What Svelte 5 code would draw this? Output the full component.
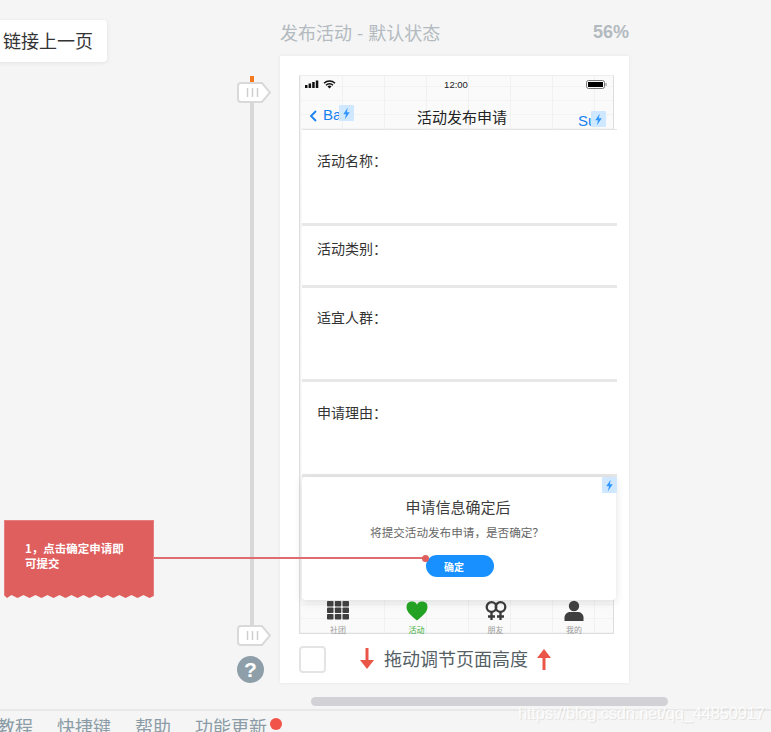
<script>
  const sections = [
    { label: "活动名称：", height: 96, pad: 20 },
    { label: "活动类别：", height: 62, pad: 12 },
    { label: "适宜人群：", height: 94, pad: 19 },
    { label: "申请理由：", height: 95, pad: 20 },
  ];
  const tabs = [
    { label: "社团", icon: "grid" },
    { label: "活动", icon: "heart", active: true },
    { label: "朋友", icon: "gender" },
    { label: "我的", icon: "person" },
  ];
  const bottomLinks = ["教程", "快捷键", "帮助"];
</script>

{#snippet bolt()}
  <svg viewBox="0 0 16 16" width="13" height="13"><path d="M9.500 1 4 9h3.400L6 15l6-8.400H8.400z" fill="#2f95ff" /></svg>
{/snippet}

{#snippet handle()}
  <svg viewBox="0 0 34 21" width="34" height="21">
    <path d="M4 1h21l8 9.500-8 9.500H4a3 3 0 0 1-3-3V4a3 3 0 0 1 3-3z" fill="#fff" stroke="#d9d9d9" stroke-width="2" />
    <path d="M10.500 6v9M15.500 6v9M20.500 6v9" stroke="#cfcfcf" stroke-width="1.500" />
  </svg>
{/snippet}

<div class="page">
  <div class="link-box">链接上一页</div>

  <div class="page-title">
    <span>发布活动 - 默认状态</span>
    <b>56%</b>
  </div>

  <div class="ruler">
    <div class="ruler-tick"></div>
    <div class="ruler-line"></div>
    <div class="handle top">{@render handle()}</div>
    <div class="handle bottom">{@render handle()}</div>
  </div>
  <div class="help">?</div>

  <div class="card">
    <div class="phone">
      <div class="status">
        <svg viewBox="0 0 34 11" width="34" height="11">
          <path d="M0 6h2.500v3H0zM3.600 4.500h2.500V9H3.600zM7.200 3h2.500v6H7.200zM10.800 1.500h2.500V9h-2.500z" fill="#111" />
          <path d="M19 4.300a8 8 0 0 1 11 0M21 6.300a5 5 0 0 1 7 0" fill="none" stroke="#111" stroke-width="1.500" />
          <path d="m24.500 9.500-2-2a3 3 0 0 1 4 0z" fill="#111" />
        </svg>
        <span class="clock">12:00</span>
        <svg viewBox="0 0 21 9" width="21" height="9">
          <rect x="0.500" y="0.500" width="18" height="8" rx="2" fill="none" stroke="#777" />
          <rect x="2" y="2" width="15" height="5" fill="#000" />
          <rect x="19.500" y="3" width="1" height="3" fill="#888" />
        </svg>
      </div>

      <div class="nav">
        <svg class="chevron" viewBox="0 0 8 12" width="8" height="12"><path d="M7 1 2 6l5 5" fill="none" stroke="#1681f0" stroke-width="1.800" /></svg>
        <span class="nav-left">Ba</span>
        <span class="nav-title">活动发布申请</span>
        <span class="nav-right">Su</span>
        <span class="bolt-badge back">{@render bolt()}</span>
        <span class="bolt-badge submit">{@render bolt()}</span>
      </div>

      <div class="sheet">
        {#each sections as section}
          <div class="section" style="height: {section.height}px; padding-top: {section.pad}px">{section.label}</div>
        {/each}
      </div>

      <div class="dialog">
        <span class="bolt-badge dialog-bolt">{@render bolt()}</span>
        <div class="dialog-title">申请信息确定后</div>
        <div class="dialog-text">将提交活动发布申请，是否确定？</div>
        <button class="confirm">确定</button>
      </div>

      <div class="tabbar">
        {#each tabs as tab}
          <div class="tab" class:active={tab.active}>
            <svg viewBox="0 0 24 22" width="24" height="22">
              {#if tab.icon === "grid"}
                <g fill="#3f3f3f">
                  <rect x="1" y="1" width="6.500" height="5.500" rx="0.800" /><rect x="8.800" y="1" width="6.500" height="5.500" rx="0.800" /><rect x="16.500" y="1" width="6.500" height="5.500" rx="0.800" />
                  <rect x="1" y="7.500" width="6.500" height="5.500" rx="0.800" /><rect x="8.800" y="7.500" width="6.500" height="5.500" rx="0.800" /><rect x="16.500" y="7.500" width="6.500" height="5.500" rx="0.800" />
                  <rect x="1" y="14" width="6.500" height="5.500" rx="0.800" /><rect x="8.800" y="14" width="6.500" height="5.500" rx="0.800" /><rect x="16.500" y="14" width="6.500" height="5.500" rx="0.800" />
                </g>
              {:else if tab.icon === "heart"}
                <path d="M12 20.500C6 15.500 1.500 12 1.500 7A5.500 5.500 0 0 1 12 4.700 5.500 5.500 0 0 1 22.500 7c0 5-4.500 8.500-10.500 13.500z" fill="#22a122" />
              {:else if tab.icon === "gender"}
                <g fill="none" stroke="#3a3a3a" stroke-width="2.300">
                  <circle cx="7.500" cy="7" r="4.800" />
                  <circle cx="16.500" cy="7" r="4.800" />
                  <path d="M7.500 12v8M4 16.500h7M16.500 12v8M13 16.500h7" />
                </g>
              {:else}
                <g fill="#3f3f3f">
                  <circle cx="12" cy="6" r="5.200" />
                  <path d="M2.500 21v-3.500c0-3.500 3-5.500 6-5.500h7c3 0 6 2 6 5.500V21z" />
                </g>
              {/if}
            </svg>
            <span>{tab.label}</span>
          </div>
        {/each}
      </div>
    </div>

    <div class="height-bar">
      <div class="checkbox"></div>
      <svg class="arrow down" viewBox="0 0 16 22" width="16" height="22"><path d="M8 0v14" stroke="#ea5548" stroke-width="3" /><path d="M1 12h14l-7 9z" fill="#ea5548" /></svg>
      <span>拖动调节页面高度</span>
      <svg class="arrow" viewBox="0 0 16 22" width="16" height="22"><path d="M8 22V8" stroke="#ea5548" stroke-width="3" /><path d="M1 10h14L8 1z" fill="#ea5548" /></svg>
    </div>
  </div>

  <div class="note">1，点击确定申请即可提交</div>
  <div class="note-line"></div>
  <div class="note-dot"></div>

  <div class="scrollbar"></div>

  <div class="footer">
    {#each bottomLinks as link}
      <span>{link}</span>
    {/each}
    <span class="update">功能更新<i></i></span>
  </div>

  <div class="watermark">https://blog.csdn.net/qq_44850917</div>
</div>

<style>
  :global(body) {
    margin: 0;
    background: #f5f5f5;
  }

  .page {
    position: relative;
    width: 771px;
    height: 732px;
    overflow: hidden;
    background: #f5f5f5;
    font-family: "Noto Sans CJK SC", "Liberation Sans", sans-serif;
  }

  .link-box {
    position: absolute;
    left: -8px;
    top: 20px;
    width: 115px;
    height: 42px;
    box-sizing: border-box;
    padding-left: 11px;
    line-height: 40px;
    font-size: 18px;
    color: #333;
    background: #fff;
    border-radius: 4px;
    box-shadow: 0 1px 4px rgba(0, 0, 0, 0.08);
  }

  .page-title {
    position: absolute;
    left: 280px;
    top: 19px;
    width: 349px;
    display: flex;
    justify-content: space-between;
    font-size: 18px;
    line-height: 26px;
    color: #b3bac0;
  }

  .page-title span {
    word-spacing: 1px;
  }

  .page-title b {
    font-family: "Liberation Sans", sans-serif;
    font-size: 18px;
  }

  .ruler {
    position: absolute;
    left: 237px;
    top: 76px;
    width: 34px;
    height: 571px;
  }

  .ruler-tick {
    position: absolute;
    left: 13px;
    top: 0;
    width: 4px;
    height: 8px;
    background: #f47a20;
  }

  .ruler-line {
    position: absolute;
    left: 13px;
    top: 8px;
    width: 4px;
    height: 552px;
    background: #d8d8d8;
  }

  .handle {
    position: absolute;
    left: 0;
    line-height: 0;
  }

  .handle.top {
    top: 6px;
  }

  .handle.bottom {
    top: 549px;
  }

  .help {
    position: absolute;
    left: 237px;
    top: 656px;
    width: 27px;
    height: 27px;
    border-radius: 50%;
    background: #8e9fa9;
    color: #fff;
    font: bold 21px/27px "Liberation Sans", sans-serif;
    text-align: center;
  }

  .card {
    position: absolute;
    left: 280px;
    top: 56px;
    width: 349px;
    height: 627px;
    box-sizing: border-box;
    padding: 19px 0 0 19px;
    background: #fff;
    box-shadow: 0 0 4px rgba(0, 0, 0, 0.06);
  }

  .phone {
    position: relative;
    width: 315px;
    height: 559px;
    box-sizing: border-box;
    border: 1px solid #dcdfe0;
    border-top-color: #eee;
    background-color: #fafafa;
    background-image: repeating-linear-gradient(90deg, #f1f1f1 0 1px, transparent 1px 42px),
      repeating-linear-gradient(0deg, #f3f3f3 0 1px, transparent 1px 14px);
  }

  .status {
    display: flex;
    align-items: center;
    justify-content: space-between;
    height: 16px;
    padding: 0 6px 0 5px;
  }

  .clock {
    margin-right: 13px;
    font: 9.500px "Liberation Sans", sans-serif;
    color: #222;
  }

  .nav {
    position: relative;
    height: 37px;
  }

  .chevron {
    position: absolute;
    left: 9px;
    top: 18px;
  }

  .nav-left,
  .nav-right {
    position: absolute;
    font: 15px/18px "Liberation Sans", sans-serif;
    color: #1681f0;
  }

  .nav-left {
    left: 23px;
    top: 14px;
  }

  .nav-right {
    left: 278px;
    top: 20px;
  }

  .nav-title {
    position: absolute;
    left: 117px;
    top: 14px;
    font-size: 15px;
    line-height: 22px;
    color: #222;
  }

  .bolt-badge {
    position: absolute;
    display: flex;
    align-items: center;
    justify-content: center;
    width: 15px;
    height: 16px;
    background: #cfe8ff;
    border-radius: 1px;
  }

  .bolt-badge.back {
    left: 39px;
    top: 13px;
  }

  .bolt-badge.submit {
    left: 291px;
    top: 19px;
  }

  .sheet {
    width: 315px;
    margin-left: 2px;
    border-top: 1px solid #e4e4e4;
    background: #fff;
  }

  .section {
    box-sizing: border-box;
    padding-left: 15px;
    border-bottom: 3px solid #e8e8e8;
    font-size: 14px;
    line-height: 20px;
    color: #333;
    background: #fff;
  }

  .dialog {
    position: absolute;
    left: 2px;
    top: 401px;
    width: 314px;
    height: 123px;
    box-sizing: border-box;
    padding-top: 20px;
    display: flex;
    flex-direction: column;
    align-items: center;
    background: #fff;
    border-radius: 4px;
    box-shadow: 0 2px 8px rgba(0, 0, 0, 0.12);
  }

  .dialog-title {
    margin-right: 2px;
    font-size: 15px;
    line-height: 20px;
    color: #3d3d3d;
  }

  .dialog-text {
    margin-top: 5px;
    margin-right: 4px;
    font-size: 11.600px;
    line-height: 20px;
    color: #666;
  }

  .confirm {
    width: 68px;
    height: 22px;
    margin-top: 13px;
    margin-left: 2px;
    padding: 0 12px 0 0;
    border: none;
    border-radius: 11px;
    background: #1890ff;
    color: #fff;
    font-family: inherit;
    font-size: 10px;
    font-weight: 700;
  }

  .bolt-badge.dialog-bolt {
    left: 300px;
    top: 0;
  }

  .tabbar {
    position: absolute;
    left: -1px;
    bottom: 0;
    width: 100%;
    height: 33px;
    display: grid;
    grid-template-columns: 78px 79px 79px 78px;
  }

  .tab {
    display: flex;
    flex-direction: column;
    align-items: center;
    font-size: 8px;
    line-height: 11px;
    color: #999;
  }

  .tab span {
    margin-top: 2px;
  }

  .tab.active {
    color: #3cae3c;
  }

  .height-bar {
    display: flex;
    align-items: center;
    height: 27px;
    margin-top: 12px;
    font-size: 18px;
    color: #555f66;
  }

  .checkbox {
    width: 27px;
    height: 27px;
    box-sizing: border-box;
    border: 2px solid #e4e4e4;
    border-radius: 4px;
  }

  .arrow {
    margin-top: -2px;
  }

  .arrow.down {
    margin-left: 33px;
  }

  .height-bar span {
    margin: -4px 8px 0 9px;
  }

  .note {
    position: absolute;
    left: 4px;
    top: 520px;
    width: 150px;
    height: 78px;
    box-sizing: border-box;
    padding: 20px 25px 0 20px;
    background: #df5f5f;
    border: 1px solid #e57e7e;
    border-bottom: none;
    clip-path: polygon(0 0, 100% 0, 100% 97%, 97% 100%, 93% 96%, 89% 100%, 85% 96%, 81% 100%, 77% 96%, 73% 100%, 69% 96%, 65% 100%, 61% 96%, 57% 100%, 53% 96%, 49% 100%, 45% 96%, 41% 100%, 37% 96%, 33% 100%, 29% 96%, 25% 100%, 21% 96%, 17% 100%, 13% 96%, 9% 100%, 5% 96%, 2% 100%, 0 96%);
    color: #fff;
    font-size: 11.500px;
    font-weight: 700;
    line-height: 15px;
  }

  .note-line {
    position: absolute;
    left: 154px;
    top: 557px;
    width: 271px;
    height: 2px;
    background: #e06c6f;
  }

  .note-dot {
    position: absolute;
    left: 422px;
    top: 555px;
    width: 7px;
    height: 7px;
    border-radius: 50%;
    background: #df5f5f;
  }

  .scrollbar {
    position: absolute;
    left: 311px;
    top: 697px;
    width: 357px;
    height: 9px;
    border-radius: 5px;
    background: #d1d1d6;
  }

  .footer {
    position: absolute;
    left: -3px;
    top: 709px;
    width: 780px;
    height: 23px;
    display: flex;
    gap: 24px;
    font-size: 18px;
    line-height: 34px;
    color: #8b9ca6;
  }

  .footer::before {
    content: "";
    position: absolute;
    left: 0;
    top: 0;
    width: 100%;
    height: 2px;
    background: #e8e8e8;
  }

  .update {
    position: relative;
  }

  .update i {
    position: absolute;
    left: 75px;
    top: 9px;
    width: 12px;
    height: 12px;
    border-radius: 50%;
    background: #f1524a;
  }

  .watermark {
    position: absolute;
    left: 518px;
    top: 703px;
    font: 16.500px/20px "Liberation Sans", sans-serif;
    letter-spacing: -0.200px;
    color: rgba(255, 255, 255, 0.9);
    text-shadow: 1px 1px 1px rgba(120, 120, 120, 0.18);
    white-space: nowrap;
  }
</style>
